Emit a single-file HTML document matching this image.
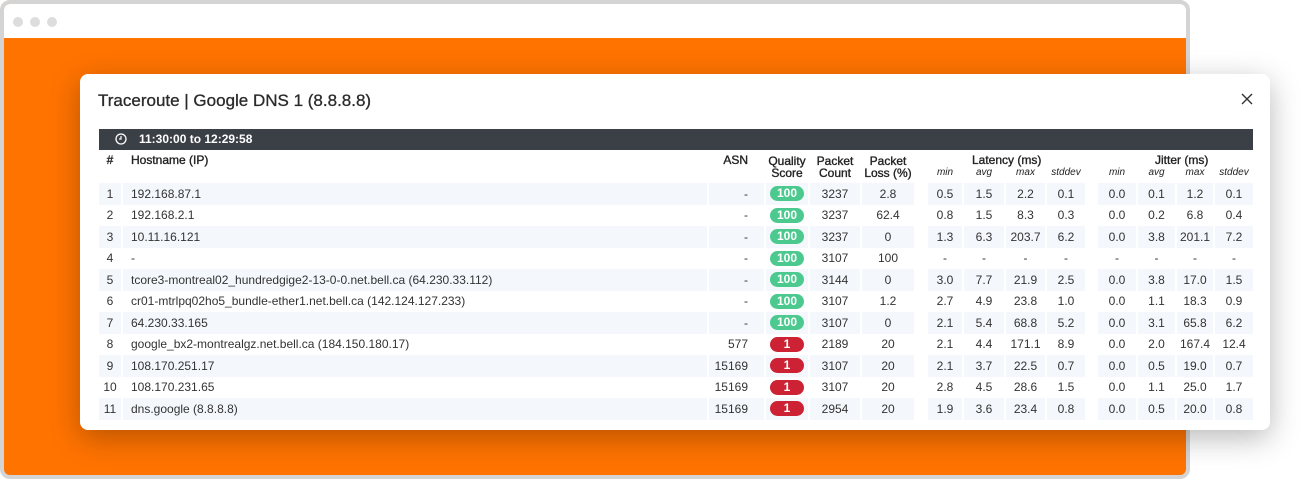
<!DOCTYPE html>
<html><head><meta charset="utf-8"><style>
*{margin:0;padding:0;box-sizing:border-box}
body{width:1314px;height:480px;background:#fff;position:relative;overflow:hidden;font-family:"Liberation Sans",sans-serif;color:#333}
.frame{position:absolute;left:0;top:0;width:1190px;height:479px;border:4px solid #d4d4d4;border-radius:10px;background:#ff7300;overflow:hidden}
.bar{position:absolute;left:0;top:0;right:0;height:34px;background:#fff}
.dot{position:absolute;top:13px;width:10px;height:10px;border-radius:50%;background:#ddd}
.modal{position:absolute;left:80px;top:74px;width:1190px;height:356px;background:#fff;border-radius:8px;box-shadow:0 8px 30px rgba(0,0,0,.28)}
h1{position:absolute;left:18px;top:17px;font-size:17px;font-weight:normal;color:#2a2a2a;-webkit-text-stroke:0.3px #2a2a2a}
.x{position:absolute;left:1161px;top:19px;width:12px;height:12px}
.tb{position:absolute;left:19px;top:55px;width:1154px;height:21px;background:#3b3f46;color:#fff;font-size:12px;font-weight:bold;line-height:21px;padding-left:40px}
.tb svg{position:absolute;left:16px;top:4px}
table{position:absolute;left:19px;top:77px;border-collapse:separate;border-spacing:2px 0;margin-left:-2px;font-size:12px;table-layout:fixed}
td,th{height:21.5px;text-align:center;padding:0;white-space:nowrap}
th{font-weight:normal;color:#222;font-size:12px;line-height:12px;vertical-align:bottom;padding-bottom:4px;height:32px;-webkit-text-stroke:0.35px #222}
th i{font-size:10px;-webkit-text-stroke:0}
tr.o td{background:#f4f7fb}
tr.o td.g{background:none}
td.h{text-align:left;padding-left:8px}
td.a{text-align:right;padding-right:16px}
.b{display:inline-block;width:34px;height:15px;border-radius:8px;color:#fff;font-weight:bold;line-height:15px;font-size:12px}
.gr{background:#4cc98e}.rd{background:#cc2233}
</style></head><body>
<div class="frame"><div class="bar"><div class="dot" style="left:9px"></div><div class="dot" style="left:26px"></div><div class="dot" style="left:43px"></div></div></div>
<div class="modal">
<h1>Traceroute | Google DNS 1 (8.8.8.8)</h1>
<svg class="x" viewBox="0 0 12 12"><path d="M1 1L11 11M11 1L1 11" stroke="#333" stroke-width="1.4"/></svg>
<div class="tb"><svg width="12" height="12" viewBox="0 0 12 12"><circle cx="6" cy="6" r="5" fill="none" stroke="#fff" stroke-width="1.3"/><path d="M6 3V6H4" fill="none" stroke="#fff" stroke-width="1.2"/></svg>11:30:00 to 12:29:58</div>
<table>
<colgroup><col style="width:22px"><col style="width:584px"><col style="width:55px"><col style="width:42px"><col style="width:50px"><col style="width:52px"><col style="width:10px"><col style="width:34px"><col style="width:40px"><col style="width:39px"><col style="width:38px"><col style="width:9px"><col style="width:38px"><col style="width:37px"><col style="width:36px"><col style="width:38px"></colgroup>
<tr><th style="vertical-align:top;padding-top:3px">#</th><th style="text-align:left;padding-left:8px;vertical-align:top;padding-top:3px">Hostname (IP)</th><th style="text-align:right;padding-right:16px;vertical-align:top;padding-top:3px">ASN</th><th>Quality<br>Score</th><th>Packet<br>Count</th><th>Packet<br>Loss (%)</th><th></th><th><i>min</i></th><th style="position:relative"><i>avg</i><span style="position:absolute;left:8px;top:3px">Latency&nbsp;(ms)</span></th><th><i>max</i></th><th><i>stddev</i></th><th></th><th><i>min</i></th><th style="position:relative"><i>avg</i><span style="position:absolute;left:17px;top:3px">Jitter&nbsp;(ms)</span></th><th><i>max</i></th><th><i>stddev</i></th></tr>
<tr class="o"><td>1</td><td class="h">192.168.87.1</td><td class="a">-</td><td><span class="b gr">100</span></td><td>3237</td><td>2.8</td><td class="g"></td><td>0.5</td><td>1.5</td><td>2.2</td><td>0.1</td><td class="g"></td><td>0.0</td><td>0.1</td><td>1.2</td><td>0.1</td></tr>
<tr><td>2</td><td class="h">192.168.2.1</td><td class="a">-</td><td><span class="b gr">100</span></td><td>3237</td><td>62.4</td><td></td><td>0.8</td><td>1.5</td><td>8.3</td><td>0.3</td><td></td><td>0.0</td><td>0.2</td><td>6.8</td><td>0.4</td></tr>
<tr class="o"><td>3</td><td class="h">10.11.16.121</td><td class="a">-</td><td><span class="b gr">100</span></td><td>3237</td><td>0</td><td class="g"></td><td>1.3</td><td>6.3</td><td>203.7</td><td>6.2</td><td class="g"></td><td>0.0</td><td>3.8</td><td>201.1</td><td>7.2</td></tr>
<tr><td>4</td><td class="h">-</td><td class="a">-</td><td><span class="b gr">100</span></td><td>3107</td><td>100</td><td></td><td>-</td><td>-</td><td>-</td><td>-</td><td></td><td>-</td><td>-</td><td>-</td><td>-</td></tr>
<tr class="o"><td>5</td><td class="h">tcore3-montreal02_hundredgige2-13-0-0.net.bell.ca (64.230.33.112)</td><td class="a">-</td><td><span class="b gr">100</span></td><td>3144</td><td>0</td><td class="g"></td><td>3.0</td><td>7.7</td><td>21.9</td><td>2.5</td><td class="g"></td><td>0.0</td><td>3.8</td><td>17.0</td><td>1.5</td></tr>
<tr><td>6</td><td class="h">cr01-mtrlpq02ho5_bundle-ether1.net.bell.ca (142.124.127.233)</td><td class="a">-</td><td><span class="b gr">100</span></td><td>3107</td><td>1.2</td><td></td><td>2.7</td><td>4.9</td><td>23.8</td><td>1.0</td><td></td><td>0.0</td><td>1.1</td><td>18.3</td><td>0.9</td></tr>
<tr class="o"><td>7</td><td class="h">64.230.33.165</td><td class="a">-</td><td><span class="b gr">100</span></td><td>3107</td><td>0</td><td class="g"></td><td>2.1</td><td>5.4</td><td>68.8</td><td>5.2</td><td class="g"></td><td>0.0</td><td>3.1</td><td>65.8</td><td>6.2</td></tr>
<tr><td>8</td><td class="h">google_bx2-montrealgz.net.bell.ca (184.150.180.17)</td><td class="a">577</td><td><span class="b rd">1</span></td><td>2189</td><td>20</td><td></td><td>2.1</td><td>4.4</td><td>171.1</td><td>8.9</td><td></td><td>0.0</td><td>2.0</td><td>167.4</td><td>12.4</td></tr>
<tr class="o"><td>9</td><td class="h">108.170.251.17</td><td class="a">15169</td><td><span class="b rd">1</span></td><td>3107</td><td>20</td><td class="g"></td><td>2.1</td><td>3.7</td><td>22.5</td><td>0.7</td><td class="g"></td><td>0.0</td><td>0.5</td><td>19.0</td><td>0.7</td></tr>
<tr><td>10</td><td class="h">108.170.231.65</td><td class="a">15169</td><td><span class="b rd">1</span></td><td>3107</td><td>20</td><td></td><td>2.8</td><td>4.5</td><td>28.6</td><td>1.5</td><td></td><td>0.0</td><td>1.1</td><td>25.0</td><td>1.7</td></tr>
<tr class="o"><td>11</td><td class="h">dns.google (8.8.8.8)</td><td class="a">15169</td><td><span class="b rd">1</span></td><td>2954</td><td>20</td><td class="g"></td><td>1.9</td><td>3.6</td><td>23.4</td><td>0.8</td><td class="g"></td><td>0.0</td><td>0.5</td><td>20.0</td><td>0.8</td></tr>
</table>
</div>
</body></html>
